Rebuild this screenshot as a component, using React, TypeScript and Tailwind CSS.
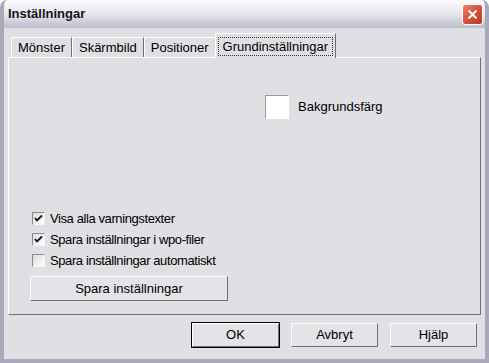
const font = { fontFamily: '"Liberation Sans", Arial, sans-serif' };

function Tab({ label, active }: { label: string; active?: boolean }) {
  if (active) {
    return (
      <div className="relative z-10 -mx-[1px] flex h-[25px] items-start border-l border-t border-r border-l-white border-t-white border-r-[#6f6f78] bg-[#e0dfe3] px-[2px] pt-[3px]">
        <span className="border border-dotted border-[#333] px-[4px] leading-[17px]">{label}</span>
      </div>
    );
  }
  return (
    <div className="mt-[4px] flex h-[20px] items-center border-l border-t border-r border-l-white border-t-white border-r-[#6f6f78] px-[6px]">
      {label}
    </div>
  );
}

function Check({ checked, label }: { checked?: boolean; label: string }) {
  return (
    <div className="flex h-[21px] items-center">
      <div className="flex h-[13px] w-[13px] items-center justify-center border border-t-[#8a8a90] border-l-[#8a8a90] border-r-[#f4f4f4] border-b-[#f4f4f4] bg-gradient-to-br from-[#dcdcdc] to-white">
        {checked && (
          <svg width="9" height="9" viewBox="0 0 9 9">
            <path d="M1 4 L3 6.5 L8 1.5" fill="none" stroke="#111" strokeWidth="1.8" />
          </svg>
        )}
      </div>
      <span className="ml-[5px] tracking-[-0.4px]">{label}</span>
    </div>
  );
}

function Btn({ label, def, className }: { label: string; def?: boolean; className?: string }) {
  return (
    <div className={`${def ? "border border-black" : "border border-transparent"} ${className ?? ""}`}>
      <div className="flex h-full w-full items-center justify-center border border-t-white border-l-white border-r-[#6e6e74] border-b-[#6e6e74] bg-[#e4e3e7]">
        {label}
      </div>
    </div>
  );
}

export default function App() {
  return (
    <div
      className="flex h-[363px] w-[489px] flex-col overflow-hidden rounded-t-[7px] border-x-[4px] border-b-[4px] border-[#a9a9bb] bg-[#a9a9bb] text-[13px] text-black"
      style={font}
    >
      <div className="-mx-[4px] flex h-[28px] shrink-0 items-center justify-between bg-gradient-to-b from-[#fbfbfd] via-[#e6e6ee] to-[#bdbdcc] pl-[8px] pr-[6px]">
        <span className="font-bold text-[#15151a]">Inställningar</span>
        <div className="flex h-[21px] w-[21px] items-center justify-center rounded-[3px] border border-white bg-gradient-to-br from-[#e6846c] via-[#d4523a] to-[#b83a24]">
          <svg width="11" height="11" viewBox="0 0 11 11">
            <path d="M1.5 1.5 L9.5 9.5 M9.5 1.5 L1.5 9.5" stroke="white" strokeWidth="2" />
          </svg>
        </div>
      </div>

      <div className="flex flex-1 flex-col bg-[#e0dfe3] px-[4px] pt-[5px]">
        <div className="flex items-start pl-[3px]">
          <Tab label="Mönster" />
          <Tab label="Skärmbild" />
          <Tab label="Positioner" />
          <Tab label="Grundinställningar" active />
        </div>

        <div className="-mt-[1px] flex h-[258px] flex-col border border-t-white border-l-white border-r-[#6f6f78] border-b-[#6f6f78] px-[23px] pb-[12px]">
          <div className="ml-[233px] mt-[37px] flex items-center">
            <div className="h-[24px] w-[24px] border border-t-[#9a9aa0] border-l-[#9a9aa0] border-r-white border-b-white bg-white" />
            <span className="ml-[9px]">Bakgrundsfärg</span>
          </div>
          <div className="flex-1" />
          <Check checked label="Visa alla varningstexter" />
          <Check checked label="Spara inställningar i wpo-filer" />
          <Check label="Spara inställningar automatiskt" />
          <Btn label="Spara inställningar" className="ml-[-3px] mt-[4px] h-[27px] w-[200px]" />
        </div>

        <div className="mt-[7px] flex justify-end gap-[10px] pr-[3px]">
          <Btn label="OK" def className="h-[26px] w-[89px]" />
          <Btn label="Avbryt" className="h-[26px] w-[89px]" />
          <Btn label="Hjälp" className="h-[26px] w-[89px]" />
        </div>
      </div>
    </div>
  );
}
